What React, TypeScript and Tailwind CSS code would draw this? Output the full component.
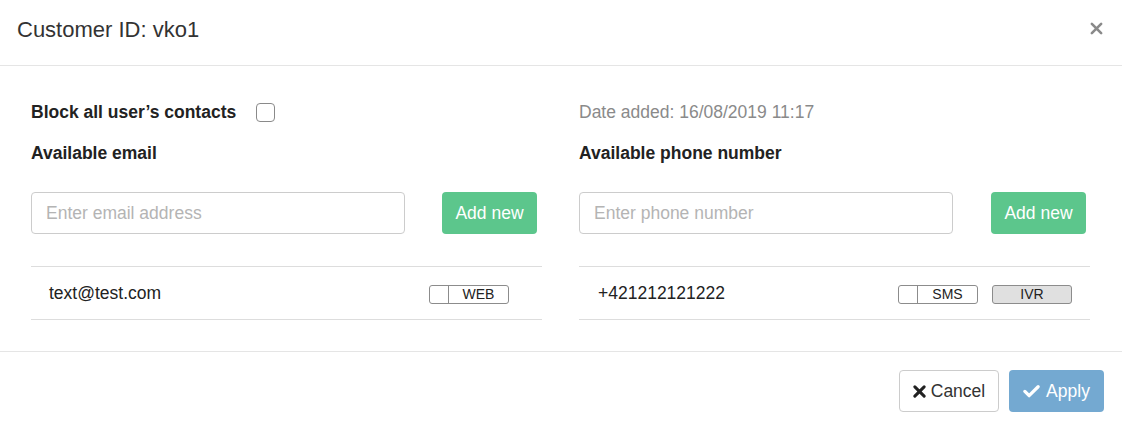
import { useState } from 'react';

function Toggle({ label, filled = false }: { label: string; filled?: boolean }) {
  return (
    <div
      className={`flex h-[19px] w-[80px] items-stretch overflow-hidden rounded-[3px] border border-[#8c8c8c] text-[14px] leading-[17px] text-[#222] ${
        filled ? 'bg-[#e0e0e0]' : 'bg-white'
      }`}
    >
      {!filled && <span className="w-[19px] shrink-0 border-r border-[#8c8c8c]" />}
      <span className="flex flex-1 items-center justify-center">{label}</span>
    </div>
  );
}

function CloseIcon({ className, width = 2.8 }: { className?: string; width?: number }) {
  return (
    <svg viewBox="0 0 14 14" className={className} fill="none" stroke="currentColor" strokeWidth={width} strokeLinecap="round">
      <path d="M2 2 L12 12 M12 2 L2 12" />
    </svg>
  );
}

function CheckIcon({ className }: { className?: string }) {
  return (
    <svg viewBox="0 0 18 14" className={className} fill="none" stroke="currentColor" strokeWidth="3.4" strokeLinecap="round" strokeLinejoin="round">
      <path d="M2 7.5 L6.5 12 L16 2.5" />
    </svg>
  );
}

export default function App() {
  const [blockAll, setBlockAll] = useState(false);
  const [email, setEmail] = useState('');
  const [phone, setPhone] = useState('');

  return (
    <div className="h-[428px] w-[1122px] bg-white font-['Liberation_Sans',Arial,sans-serif] text-[17.5px] text-[#333]">
      {/* header */}
      <div className="flex h-[66px] items-start justify-between border-b border-[#e5e5e5] pl-[17px] pr-[19px] pt-[17px]">
        <h4 className="text-[22px] leading-[26px] text-[#333]">Customer ID: vko1</h4>
        <button className="mt-[5px] text-[#8a8a8a]">
          <CloseIcon className="h-[13px] w-[13px]" />
        </button>
      </div>

      {/* body */}
      <div className="flex gap-[37px] pb-[31px] pl-[31px] pr-[32px] pt-[35px]">
        {/* email column */}
        <div className="w-[511px]">
          <div className="flex h-[22px] items-center">
            <span className="font-bold leading-[22px] text-[#222]">Block all user’s contacts</span>
            <button
              onClick={() => setBlockAll(!blockAll)}
              className="ml-[20px] h-[19px] w-[19px] rounded-[4px] border border-[#8a8a8a] bg-white"
            />
          </div>
          <div className="mt-[19px] font-bold leading-[22px] text-[#222]">Available email</div>
          <div className="mt-[28px] flex">
            <input
              value={email}
              onChange={e => setEmail(e.target.value)}
              placeholder="Enter email address"
              className="h-[42px] w-[374px] rounded-[4px] border border-[#ccc] px-[14px] text-[17.5px] outline-none placeholder:text-[#b4b4b4]"
            />
            <button className="ml-[37px] h-[42px] w-[95px] rounded-[4px] bg-[#5cc68c] text-white">Add new</button>
          </div>
          <div className="mt-[32px] flex h-[54px] items-center border-y border-[#ddd] pl-[18px] pr-[33px]">
            <span className="flex-1 text-[#222]">text@test.com</span>
            <div className="mt-[2px]">
              <Toggle label="WEB" />
            </div>
          </div>
        </div>

        {/* phone column */}
        <div className="w-[511px]">
          <div className="flex h-[22px] items-center leading-[22px] text-[#8a8a8a]">Date added: 16/08/2019 11:17</div>
          <div className="mt-[19px] font-bold leading-[22px] text-[#222]">Available phone number</div>
          <div className="mt-[28px] flex">
            <input
              value={phone}
              onChange={e => setPhone(e.target.value)}
              placeholder="Enter phone number"
              className="h-[42px] w-[374px] rounded-[4px] border border-[#ccc] px-[14px] text-[17.5px] outline-none placeholder:text-[#b4b4b4]"
            />
            <button className="ml-[38px] h-[42px] w-[95px] rounded-[4px] bg-[#5cc68c] text-white">Add new</button>
          </div>
          <div className="mt-[32px] flex h-[54px] items-center border-y border-[#ddd] pl-[19px] pr-[18px]">
            <span className="flex-1 text-[#222]">+421212121222</span>
            <div className="mt-[2px] flex gap-[14px]">
              <Toggle label="SMS" />
              <Toggle label="IVR" filled />
            </div>
          </div>
        </div>
      </div>

      {/* footer */}
      <div className="flex justify-end gap-[10px] border-t border-[#e5e5e5] pr-[18px] pt-[18px]">
        <button className="flex h-[42px] w-[100px] items-center justify-center gap-[5px] rounded-[4px] border border-[#ccc] bg-white text-[#333]">
          <CloseIcon className="h-[13px] w-[13px] text-[#222]" width={3.2} />
          Cancel
        </button>
        <button className="flex h-[42px] w-[95px] items-center justify-center gap-[6px] rounded-[4px] bg-[#74a9d1] text-white">
          <CheckIcon className="h-[14px] w-[17px]" />
          Apply
        </button>
      </div>
    </div>
  );
}
